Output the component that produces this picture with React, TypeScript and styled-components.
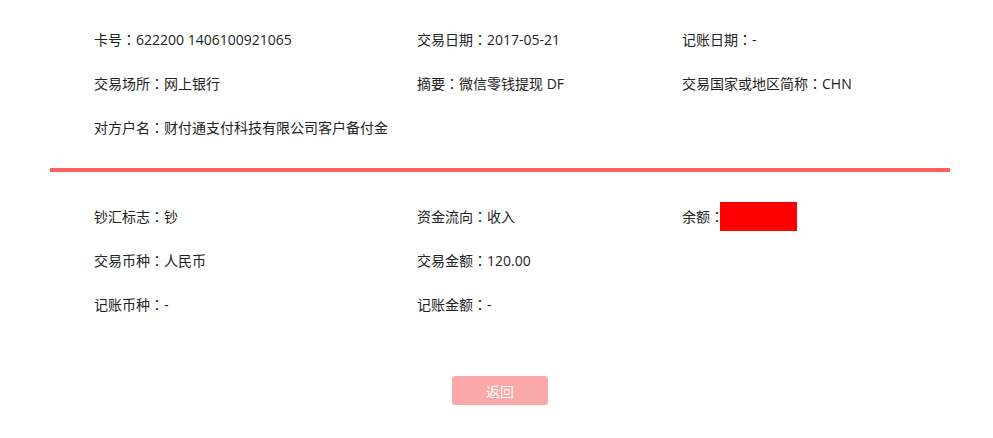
import React from 'react';
import styled, { createGlobalStyle } from 'styled-components';

const GlobalStyle = createGlobalStyle`
  html, body {
    margin: 0;
    padding: 0;
    background: #fff;
  }
  body {
    font-family: "Open Sans", "Noto Sans CJK SC", sans-serif;
    font-size: 14px;
    color: #222;
  }
`;

const Page = styled.div`
  width: 900px;
  margin: 0 0 0 50px;
`;

const Section = styled.div<{ $top: number }>`
  display: grid;
  grid-template-columns: 323px 265px 1fr;
  padding: ${({ $top }) => $top}px 0 0 44px;
`;

const Cell = styled.div`
  height: 44px;
  display: flex;
  align-items: center;
  white-space: nowrap;
`;

// centred full-width colon, as in the original font
const Colon = styled.span`
  font-family: "Noto Sans CJK TC", sans-serif;
`;

const Divider = styled.div`
  height: 4px;
  background: #ff5f5f;
  margin-top: 19px;
`;

const Masked = styled.span`
  display: inline-block;
  width: 77px;
  height: 29px;
  margin-left: -4px;
  background: #ff0000;
`;

const Footer = styled.div`
  display: flex;
  justify-content: center;
  padding-top: 50px;
`;

const BackButton = styled.button`
  width: 96px;
  height: 29px;
  border: none;
  border-radius: 3px;
  background: #fba8a8;
  color: #fff;
  font-family: inherit;
  font-size: 14px;
  cursor: pointer;
`;

interface FieldProps {
  label?: string;
  children?: React.ReactNode;
}

const Field: React.FC<FieldProps> = ({ label, children }) => (
  <Cell>
    {label && (
      <>
        {label}
        <Colon>：</Colon>
        {children}
      </>
    )}
  </Cell>
);

const top: [string, string][] = [
  ['卡号', '622200 1406100921065'],
  ['交易日期', '2017-05-21'],
  ['记账日期', '-'],
  ['交易场所', '网上银行'],
  ['摘要', '微信零钱提现 DF'],
  ['交易国家或地区简称', 'CHN'],
  ['对方户名', '财付通支付科技有限公司客户备付金'],
];

const App: React.FC = () => (
  <>
    <GlobalStyle />
    <Page>
      <Section $top={17}>
        {top.map(([label, value]) => (
          <Field key={label} label={label}>
            {value}
          </Field>
        ))}
      </Section>
      <Divider />
      <Section $top={22}>
        <Field label="钞汇标志">钞</Field>
        <Field label="资金流向">收入</Field>
        <Field label="余额">
          <Masked />
        </Field>
        <Field label="交易币种">人民币</Field>
        <Field label="交易金额">120.00</Field>
        <Field />
        <Field label="记账币种">-</Field>
        <Field label="记账金额">-</Field>
      </Section>
      <Footer>
        <BackButton>返回</BackButton>
      </Footer>
    </Page>
  </>
);

export default App;
